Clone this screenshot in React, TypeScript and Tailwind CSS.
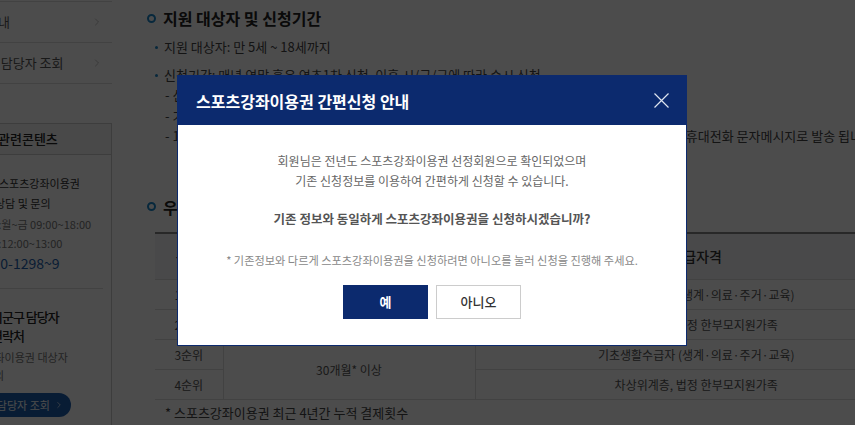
import React from 'react';
import { ChevronRight } from 'lucide-react';

const SectionTitle = ({ children, className = '' }: { children: React.ReactNode; className?: string }) => (
  <h3 className={`flex items-center h-[22px] text-[16px] font-bold text-[#222] ${className}`}>
    <span className="w-[9px] h-[9px] rounded-full border-2 border-[#1a86c8] shrink-0" />
    <span className="ml-[7px]">{children}</span>
  </h3>
);

const Sidebar = () => (
  <aside className="w-[112px] shrink-0 overflow-hidden whitespace-nowrap">
    <div className="w-[200px] -ml-[88px]">
      <ul className="mt-[1px] border-t border-[#ddd] text-[13px] text-[#555]">
        <li className="h-[41px] flex items-center justify-between border-b border-[#ddd] pl-[50px] pr-[9px]">
          <span>이용안내</span>
          <ChevronRight size={12} strokeWidth={1.2} className="text-[#999]" />
        </li>
        <li className="h-[41px] flex items-center justify-between border-b border-[#ddd] pl-[50px] pr-[9px]">
          <span>시군구 담당자 조회</span>
          <ChevronRight size={12} strokeWidth={1.2} className="text-[#999]" />
        </li>
      </ul>

      <div className="mt-[39px] border border-[#ccc] h-[400px]">
        <div className="h-[31px] flex items-center border-b border-[#ccc] bg-[#f6f6f6] pl-[85px] text-[13px] font-medium text-[#222]">
          관련콘텐츠
        </div>
        <div className="pl-[82px] pr-[8px] pt-[18px]">
          <div className="ml-[4px] text-[11px] leading-[20px] text-[#333]">
            <p>스포츠강좌이용권</p>
            <p className="-ml-[4px]">상담 및 문의</p>
          </div>
          <div className="text-[11px] text-[#777] -ml-[17px] mt-[1px] leading-[20px]">
            <p>평일:월~금 09:00~18:00</p>
          </div>
          <div className="text-[11px] text-[#777] -ml-[17px] leading-[19px]">
            <p>점심:12:00~13:00</p>
          </div>
          <p className="text-[14px] leading-[20px] text-[#1e5fae] -ml-[18px]">1670-1298~9</p>
          <div className="mt-[15px] border-t border-[#ddd]" />
          <div className="pt-[18px] -ml-[4px] text-[13px] tracking-[-1px] font-medium leading-[19px] text-[#222]">
            <p>시군구 담당자</p>
            <p>연락처</p>
          </div>
          <div className="mt-[3px] -ml-[41px] text-[11px] leading-[18px] text-[#777]">
            <p>스포츠강좌이용권 대상자</p>
            <p className="ml-[30px]">문의</p>
          </div>
          <button className="mt-[9px] -ml-[43px] h-[24px] inline-flex items-center rounded-full bg-[#1d5fb0] pl-[12px] pr-[7px] text-[11px] text-white">
            시군구 담당자 조회
            <ChevronRight size={10} strokeWidth={1.5} className="ml-[4px]" />
          </button>
        </div>
      </div>
    </div>
  </aside>
);

const Main = () => (
  <main className="flex-1 min-w-0 pl-[35px] text-[13px] text-[#444] whitespace-nowrap">
    <SectionTitle className="mt-[7px]">지원 대상자 및 신청기간</SectionTitle>
    <ul>
      <li className="mt-[8px] h-[20px] flex items-center pl-[8px]">
        <span className="w-[3px] h-[3px] rounded-full bg-[#1a86c8]" />
        <span className="ml-[6px]">지원 대상자: 만 5세 ~ 18세까지</span>
      </li>
      <li className="mt-[8px] h-[20px] flex items-center pl-[8px]">
        <span className="w-[3px] h-[3px] rounded-full bg-[#1a86c8]" />
        <span className="ml-[6px]">신청기간: 매년 연말 혹은 연초1차 신청, 이후 시/군/구에 따라 수시 신청</span>
      </li>
    </ul>
    <div className="pl-[18px] leading-[20.5px]">
      <p>- 신청방법: 온라인 홈페이지 또는 주민센터 방문 신청</p>
      <p>- 기타 자세한 사항은 관할 시/군/구 담당자에게 문의</p>
      <p>- 1차 신청 선정결과는 해당 시/군/구에서 확정후 개별 통보하며, 선정결과는 신청 시 입력한 회원의 휴대전화 문자메시지로 발송 됩니다.</p>
    </div>

    <SectionTitle className="mt-[49px]">우선순위 선정 기준</SectionTitle>
    <table className="mt-[14px] ml-[8px] w-[762px] table-fixed border-collapse text-center text-[12px] text-[#555]">
      <colgroup>
        <col className="w-[68px]" />
        <col className="w-[252px]" />
        <col className="w-[442px]" />
      </colgroup>
      <thead>
        <tr className="h-[47px] bg-[#f4f5f7] border-t-2 border-t-[#888] border-b border-b-[#ddd] text-[14px] text-[#333]">
          <th className="font-medium">순위</th>
          <th className="font-medium border-l border-[#ddd]">결제횟수</th>
          <th className="font-medium border-l border-[#ddd]">수급자격</th>
        </tr>
      </thead>
      <tbody>
        <tr className="h-[30px] border-b border-[#ddd]">
          <td>1순위</td>
          <td rowSpan={2} className="border-l border-[#ddd]">30개월* 미만</td>
          <td className="border-l border-[#ddd]">기초생활수급자 (생계·의료·주거·교육)</td>
        </tr>
        <tr className="h-[30px] border-b border-[#ddd]">
          <td>2순위</td>
          <td className="border-l border-[#ddd]">차상위계층, 법정 한부모지원가족</td>
        </tr>
        <tr className="h-[30px] border-b border-[#ddd]">
          <td>3순위</td>
          <td rowSpan={2} className="border-l border-[#ddd]">30개월* 이상</td>
          <td className="border-l border-[#ddd]">기초생활수급자 (생계·의료·주거·교육)</td>
        </tr>
        <tr className="h-[30px] border-b border-[#ddd]">
          <td>4순위</td>
          <td className="border-l border-[#ddd]">차상위계층, 법정 한부모지원가족</td>
        </tr>
      </tbody>
    </table>
    <p className="mt-[3px] pl-[18px] leading-[20px]">* 스포츠강좌이용권 최근 4년간 누적 결제횟수</p>
  </main>
);

const Modal = () => (
  <div className="absolute left-[177px] top-[75px] w-[510px] border border-[#0c2a6e] bg-white">
    <div className="h-[49px] bg-[#0c2a6e] flex items-center justify-between pl-[18px] pr-[17px]">
      <h2 className="text-white text-[16px] font-bold">스포츠강좌이용권 간편신청 안내</h2>
      <button aria-label="닫기">
        <svg width="15" height="15" viewBox="0 0 15 15" className="block">
          <path d="M0.5 0.5 L14.5 14.5 M14.5 0.5 L0.5 14.5" stroke="#dfe5f0" strokeWidth="1.2" fill="none" />
        </svg>
      </button>
    </div>
    <div className="pt-[26px] pb-[26px] text-center">
      <p className="text-[12px] leading-[20px] text-[#666]">
        회원님은 전년도 스포츠강좌이용권 선정회원으로 확인되었으며
        <br />
        기존 신청정보를 이용하여 간편하게 신청할 수 있습니다.
      </p>
      <p className="mt-[18px] text-[12.5px] leading-[20px] font-bold text-[#555]">
        기존 정보와 동일하게 스포츠강좌이용권을 신청하시겠습니까?
      </p>
      <p className="mt-[23px] text-[11.2px] leading-[16px] text-[#888]">
        * 기존정보와 다르게 스포츠강좌이용권을 신청하려면 아니오를 눌러 신청을 진행해 주세요.
      </p>
      <div className="mt-[17px] flex justify-center gap-[8px]">
        <button className="w-[85px] h-[34px] bg-[#0c2a6e] text-white text-[13px] font-bold">예</button>
        <button className="w-[85px] h-[34px] border border-[#ccc] bg-white text-[#333] text-[13px] font-medium">아니오</button>
      </div>
    </div>
  </div>
);

export default function App() {
  return (
    <div className="relative w-[855px] h-[425px] overflow-hidden bg-white font-['Noto_Sans_CJK_KR','Noto_Sans',sans-serif]">
      <div className="flex h-full">
        <Sidebar />
        <Main />
      </div>
      <div className="absolute inset-0 bg-black/70" />
      <Modal />
    </div>
  );
}
